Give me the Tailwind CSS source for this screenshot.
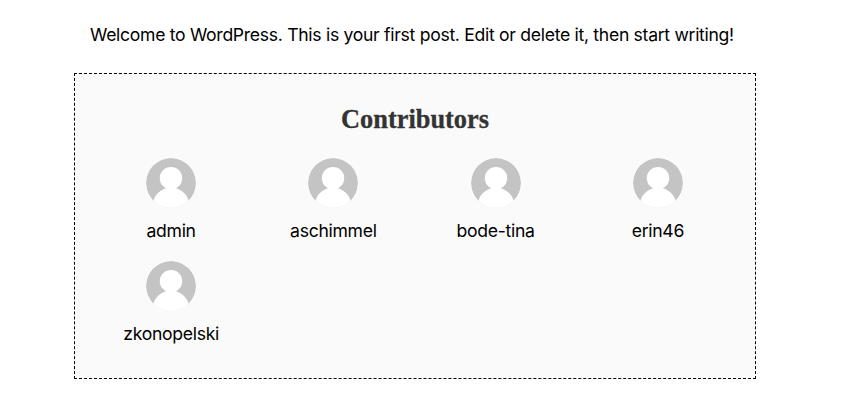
<!DOCTYPE html>
<html lang="en">
<head>
<meta charset="utf-8">
<title>Hello world!</title>
<script src="https://cdn.jsdelivr.net/npm/@tailwindcss/browser@4"></script>
</head>
<body class="bg-white font-['Inter',sans-serif] text-[17.6px] leading-[26px] tracking-[-0.3px] text-black">
<svg class="hidden"><symbol id="avatar" viewBox="0 0 50 50"><circle cx="25" cy="25" r="25" fill="#c4c4c4"/><circle cx="25" cy="20.200" r="11.200" fill="#fff"/><circle cx="25" cy="48" r="18.500" fill="#fff"/></symbol></svg>
<main class="ml-[74px] w-[682px] pt-[22px]">
<p class="ml-4 whitespace-nowrap">Welcome to WordPress. This is your first post. Edit or delete it, then start writing!</p>
<section class="mt-[25px] h-[306px] border border-dashed border-black bg-[#fafafa] px-[15px] pt-[27px]">
<h2 class="text-center font-['Source_Serif_Pro','Liberation_Serif',serif] text-[26.4px] leading-[36px] font-bold tracking-normal text-[#333] [-webkit-text-stroke:0.3px_#333]">Contributors</h2>
<ul class="mt-[21px] mr-px grid grid-cols-4 gap-y-[17px] text-center">
<li class="flex h-[86px] flex-col items-center gap-[10px]"><svg class="size-[50px] shrink-0 rounded-full"><use href="#avatar"/></svg><span>admin</span></li>
<li class="flex h-[86px] flex-col items-center gap-[10px]"><svg class="size-[50px] shrink-0 rounded-full"><use href="#avatar"/></svg><span>aschimmel</span></li>
<li class="flex h-[86px] flex-col items-center gap-[10px]"><svg class="size-[50px] shrink-0 rounded-full"><use href="#avatar"/></svg><span>bode-tina</span></li>
<li class="flex h-[86px] flex-col items-center gap-[10px]"><svg class="size-[50px] shrink-0 rounded-full"><use href="#avatar"/></svg><span>erin46</span></li>
<li class="flex h-[86px] flex-col items-center gap-[10px]"><svg class="size-[50px] shrink-0 rounded-full"><use href="#avatar"/></svg><span>zkonopelski</span></li>
</ul>
</section>
</main>
</body>
</html>
